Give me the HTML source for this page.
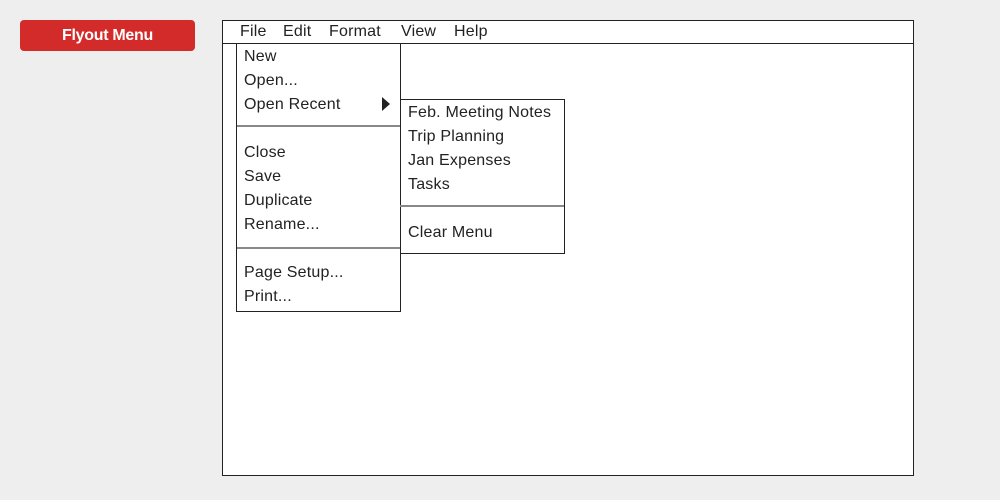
<!DOCTYPE html>
<html><head><style>
body{margin:0;width:1000px;height:500px;background:#eeeeee;font-family:"Liberation Sans",sans-serif;position:relative;overflow:hidden;color:#222}
.a{position:absolute}
.btn{left:20px;top:20px;width:175px;height:31px;background:#d32a2a;border-radius:4px;color:#fff;font-weight:bold;font-size:16px;text-align:center;line-height:31px;letter-spacing:-0.3px}
.win{left:222px;top:20px;width:690px;height:454px;border:1px solid #222;background:#fff}
.bar{left:222px;top:43px;width:692px;height:1px;background:#222}
.mi{font-size:16px;line-height:24px;height:24px;white-space:nowrap;letter-spacing:0.2px}
.menu{background:#fff;border:1px solid #222}
.sep{height:2px;background:#888}
</style></head><body>
<div class="a btn">Flyout Menu</div>
<div class="a win"></div>
<div class="a bar"></div>
<div class="a mi" style="left:240px;top:20px">File</div>
<div class="a mi" style="left:283px;top:20px">Edit</div>
<div class="a mi" style="left:329px;top:20px">Format</div>
<div class="a mi" style="left:401px;top:20px">View</div>
<div class="a mi" style="left:454px;top:20px">Help</div>

<div class="a menu" style="left:236px;top:43px;width:163px;height:267px"></div>
<div class="a mi" style="left:244px;top:45px">New</div>
<div class="a mi" style="left:244px;top:69px">Open...</div>
<div class="a mi" style="left:244px;top:93px">Open Recent</div>
<svg class="a" style="left:381px;top:96px" width="10" height="16"><path d="M1 1 L9 8 L1 15 Z" fill="#222"/></svg>
<div class="a sep" style="left:237px;top:125px;width:163px"></div>
<div class="a mi" style="left:244px;top:141px">Close</div>
<div class="a mi" style="left:244px;top:165px">Save</div>
<div class="a mi" style="left:244px;top:189px">Duplicate</div>
<div class="a mi" style="left:244px;top:213px">Rename...</div>
<div class="a sep" style="left:237px;top:247px;width:163px"></div>
<div class="a mi" style="left:244px;top:261px">Page Setup...</div>
<div class="a mi" style="left:244px;top:285px">Print...</div>

<div class="a menu" style="left:400px;top:99px;width:163px;height:153px"></div>
<div class="a mi" style="left:408px;top:101px">Feb. Meeting Notes</div>
<div class="a mi" style="left:408px;top:125px">Trip Planning</div>
<div class="a mi" style="left:408px;top:149px">Jan Expenses</div>
<div class="a mi" style="left:408px;top:173px">Tasks</div>
<div class="a sep" style="left:400px;top:205px;width:164px"></div>
<div class="a mi" style="left:408px;top:221px">Clear Menu</div>
</body></html>
